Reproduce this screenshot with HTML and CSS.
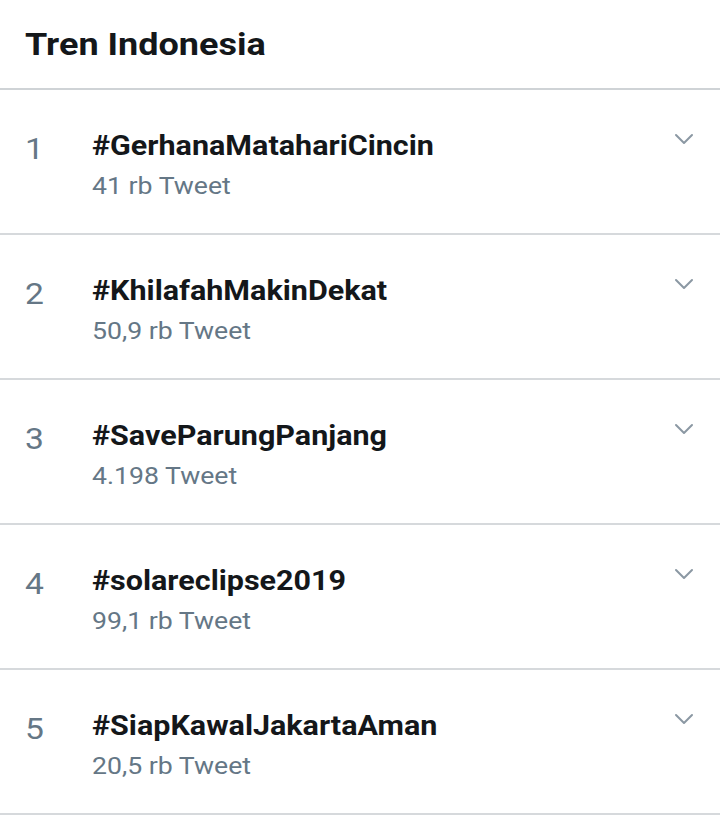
FILE: index.html
```html
<!DOCTYPE html>
<html>
<head>
<meta charset="utf-8">
<link rel="stylesheet" href="styles.css">
</head>
<body>
<div class="panel">
  <div class="header"><h1 class="title">Tren Indonesia</h1></div>
  <div class="row">
    <div class="rank">1</div>
    <div class="info"><div class="tag">#GerhanaMatahariCincin</div><div class="count">41 rb Tweet</div></div>
    <svg class="chev" width="20" height="12" viewBox="0 0 20 12"><path d="M2 2 L10 10 L18 2" fill="none" stroke="#8b98a3" stroke-width="2" stroke-linecap="round" stroke-linejoin="round"/></svg>
  </div>
  <div class="row">
    <div class="rank">2</div>
    <div class="info"><div class="tag">#KhilafahMakinDekat</div><div class="count">50,9 rb Tweet</div></div>
    <svg class="chev" width="20" height="12" viewBox="0 0 20 12"><path d="M2 2 L10 10 L18 2" fill="none" stroke="#8b98a3" stroke-width="2" stroke-linecap="round" stroke-linejoin="round"/></svg>
  </div>
  <div class="row">
    <div class="rank">3</div>
    <div class="info"><div class="tag">#SaveParungPanjang</div><div class="count">4.198 Tweet</div></div>
    <svg class="chev" width="20" height="12" viewBox="0 0 20 12"><path d="M2 2 L10 10 L18 2" fill="none" stroke="#8b98a3" stroke-width="2" stroke-linecap="round" stroke-linejoin="round"/></svg>
  </div>
  <div class="row">
    <div class="rank">4</div>
    <div class="info"><div class="tag">#solareclipse2019</div><div class="count">99,1 rb Tweet</div></div>
    <svg class="chev" width="20" height="12" viewBox="0 0 20 12"><path d="M2 2 L10 10 L18 2" fill="none" stroke="#8b98a3" stroke-width="2" stroke-linecap="round" stroke-linejoin="round"/></svg>
  </div>
  <div class="row">
    <div class="rank">5</div>
    <div class="info"><div class="tag">#SiapKawalJakartaAman</div><div class="count">20,5 rb Tweet</div></div>
    <svg class="chev" width="20" height="12" viewBox="0 0 20 12"><path d="M2 2 L10 10 L18 2" fill="none" stroke="#8b98a3" stroke-width="2" stroke-linecap="round" stroke-linejoin="round"/></svg>
  </div>
</div>
</body>
</html>
```
FILE: styles.css
```css
html, body {
  margin: 0;
  padding: 0;
  background: #ffffff;
}
body {
  font-family: Roboto, "Liberation Sans", sans-serif;
  width: 720px;
  height: 821px;
  overflow: hidden;
}
.header {
  height: 90px;
  box-sizing: border-box;
  padding: 24px 25px 0;
  border-bottom: 2px solid #cfd3d6;
}
.title {
  margin: 0;
  display: inline-block;
  font-size: 32px;
  line-height: 40px;
  font-weight: 700;
  color: #14171a;
  transform: scaleX(1.125);
  transform-origin: left center;
}
.row {
  height: 145px;
  box-sizing: border-box;
  border-bottom: 2px solid #d6d9dc;
  display: flex;
  align-items: flex-start;
  padding: 0 25px;
}
.rank {
  width: 67px;
  flex: none;
  padding-top: 41px;
  font-size: 30px;
  line-height: 36px;
  color: #657786;
  transform: scaleX(1.12);
  transform-origin: left center;
}
.info {
  flex: 1;
  padding-top: 40px;
}
.tag {
  display: inline-block;
  font-size: 27px;
  line-height: 32px;
  font-weight: 700;
  color: #14171a;
  transform: scaleX(1.13);
  transform-origin: left center;
}
.count {
  display: block;
  width: max-content;
  margin-top: 9px;
  font-size: 24px;
  line-height: 30px;
  color: #657786;
  transform: scaleX(1.11);
  transform-origin: left center;
}
.chev {
  flex: none;
  margin-top: 43px;
  margin-right: 1px;
}
```
